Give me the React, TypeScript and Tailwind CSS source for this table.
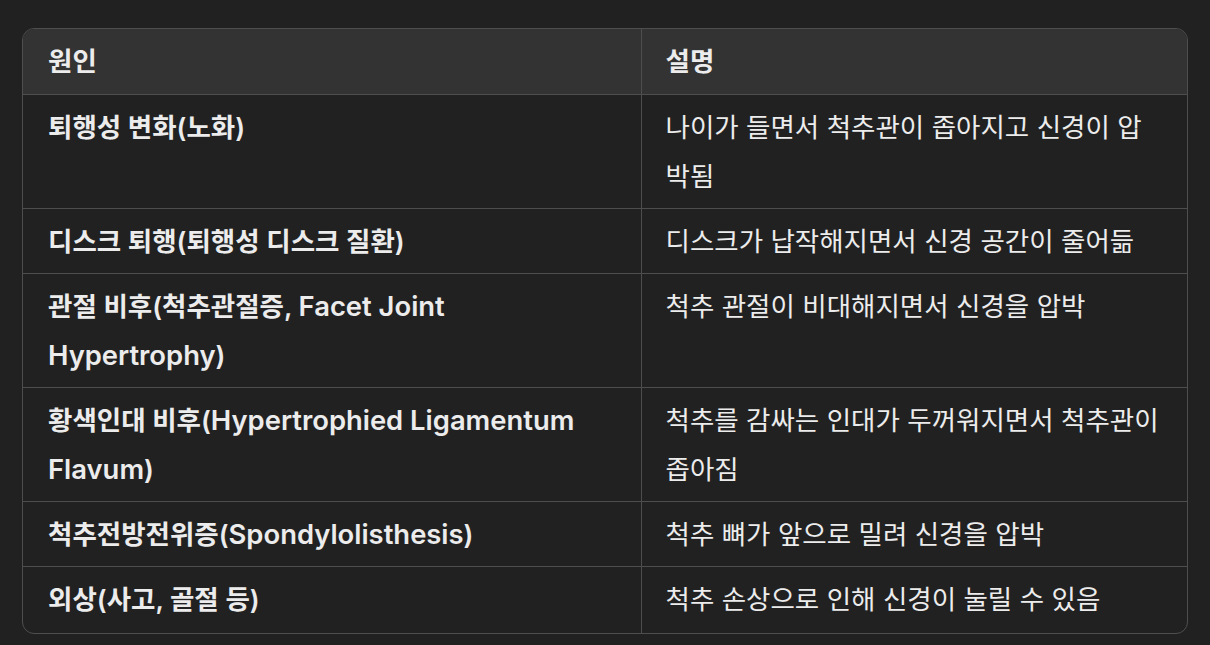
import React from "react";

const rows: [string, string][] = [
  ["퇴행성 변화(노화)", "나이가 들면서 척추관이 좁아지고 신경이 압박됨"],
  ["디스크 퇴행(퇴행성 디스크 질환)", "디스크가 납작해지면서 신경 공간이 줄어듦"],
  ["관절 비후(척추관절증, Facet Joint Hypertrophy)", "척추 관절이 비대해지면서 신경을 압박"],
  ["황색인대 비후(Hypertrophied Ligamentum Flavum)", "척추를 감싸는 인대가 두꺼워지면서 척추관이 좁아짐"],
  ["척추전방전위증(Spondylolisthesis)", "척추 뼈가 앞으로 밀려 신경을 압박"],
  ["외상(사고, 골절 등)", "척추 손상으로 인해 신경이 눌릴 수 있음"],
];

function Mixed({ text }: { text: string }) {
  const parts = text.split(/([A-Za-z][A-Za-z ]*[A-Za-z]|[A-Za-z])/);
  return (
    <>
      {parts.map((p, i) =>
        /[A-Za-z]/.test(p) ? (
          <span key={i} className="text-[27.4px]">
            {p}
          </span>
        ) : (
          <React.Fragment key={i}>{p}</React.Fragment>
        )
      )}
    </>
  );
}

export default function App() {
  return (
    <div
      className="w-[1210px] h-[645px] bg-[#212121] pl-[22px] pt-[28px] text-[#ececec]"
      style={{ fontFamily: 'Inter, "Noto Sans CJK KR", sans-serif' }}
    >
      <div className="w-[1166px] rounded-[12px] border border-[#4e4e4e] overflow-hidden">
        <table className="w-full border-collapse table-fixed text-[26.5px] leading-[49px]">
          <colgroup>
            <col className="w-[618px]" />
            <col />
          </colgroup>
          <thead>
            <tr className="bg-[#333333] border-b border-[#4e4e4e]">
              <th className="text-left font-semibold pl-[25px] pr-[24px] py-[8px] border-r border-[#4e4e4e]">
                원인
              </th>
              <th className="text-left font-semibold pl-[24px] pr-[28px] py-[8px]">
                설명
              </th>
            </tr>
          </thead>
          <tbody>
            {rows.map(([a, b], i) => {
              const last = i === rows.length - 1;
              return (
                <tr key={i} className={last ? "" : "border-b border-[#4e4e4e]"}>
                  <td
                    className={`align-top font-semibold pl-[25px] pr-[24px] border-r border-[#4e4e4e] ${
                      last ? "pt-[8px] pb-[9px]" : "pt-[7.5px] pb-[7.5px]"
                    }`}
                  >
                    <Mixed text={a} />
                  </td>
                  <td
                    className={`align-top font-normal pl-[24px] pr-[28px] ${
                      last ? "pt-[8px] pb-[9px]" : "pt-[7.5px] pb-[7.5px]"
                    }`}
                  >
                    {b}
                  </td>
                </tr>
              );
            })}
          </tbody>
        </table>
      </div>
    </div>
  );
}
